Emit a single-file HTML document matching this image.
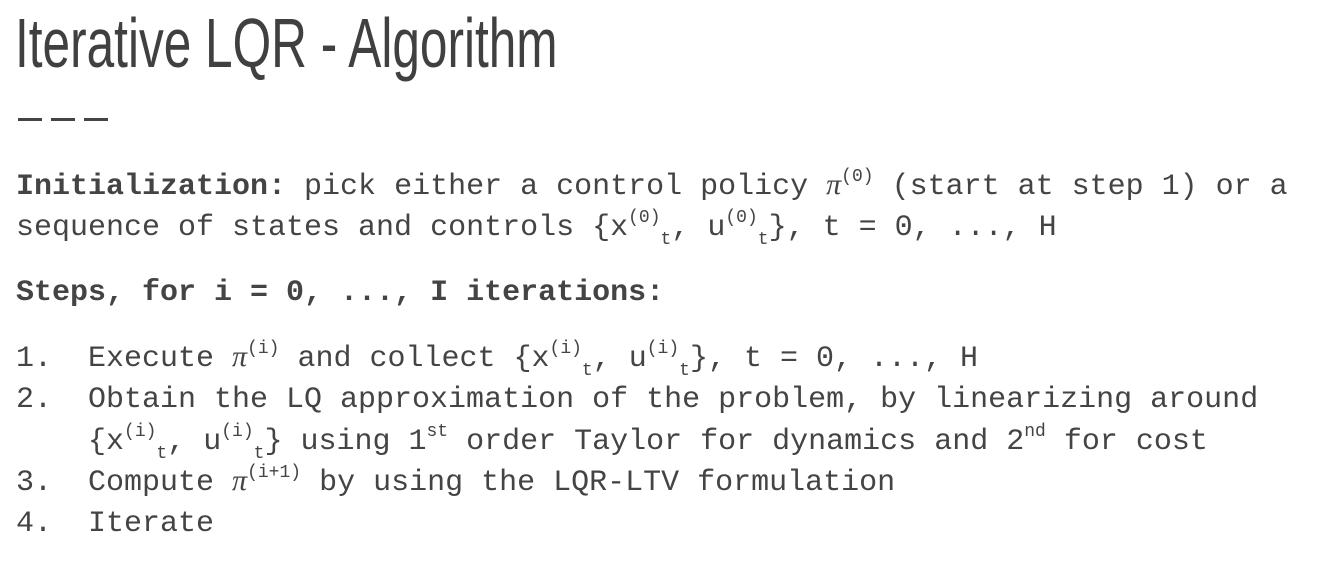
<!DOCTYPE html>
<html><head><meta charset="utf-8"><style>
body{margin:0;background:#fff;width:1328px;height:561px;overflow:hidden;color:#444;}
.t{position:absolute;left:15px;top:3px;font-family:"Liberation Sans",sans-serif;font-size:70px;line-height:80px;white-space:nowrap;transform:scaleX(0.708);transform-origin:left top;color:#404040;}
.d{position:absolute;top:118px;height:3px;width:24px;background:#444;}
.l{position:absolute;font-family:"Liberation Mono",monospace;font-size:30px;line-height:41px;height:41px;white-space:pre;}
sup,sub{font-size:18px;line-height:0;vertical-align:baseline;position:relative;}
sup{top:-13px}
sub{top:9px}
i{font-family:"Liberation Serif",serif;line-height:0;}
b{font-weight:bold}
</style></head><body>
<div class="t">Iterative LQR - Algorithm</div>
<div class="d" style="left:18px"></div><div class="d" style="left:51px"></div><div class="d" style="left:84px"></div>
<div class="l" style="left:16px;top:167px"><b>Initialization:</b> pick either a control policy <i>π</i><sup>(0)</sup> (start at step 1) or a</div>
<div class="l" style="left:16px;top:208px">sequence of states and controls {x<sup>(0)</sup><sub>t</sub>, u<sup>(0)</sup><sub>t</sub>}, t = 0, ..., H</div>
<div class="l" style="left:16px;top:273px"><b>Steps, for i = 0, ..., I iterations:</b></div>
<div class="l" style="left:16px;top:339px">1.</div>
<div class="l" style="left:88px;top:339px">Execute <i>π</i><sup>(i)</sup> and collect {x<sup>(i)</sup><sub>t</sub>, u<sup>(i)</sup><sub>t</sub>}, t = 0, ..., H</div>
<div class="l" style="left:16px;top:380px">2.</div>
<div class="l" style="left:88px;top:380px">Obtain the LQ approximation of the problem, by linearizing around</div>
<div class="l" style="left:88px;top:422px">{x<sup>(i)</sup><sub>t</sub>, u<sup>(i)</sup><sub>t</sub>} using 1<sup>st</sup> order Taylor for dynamics and 2<sup>nd</sup> for cost</div>
<div class="l" style="left:16px;top:463px">3.</div>
<div class="l" style="left:88px;top:463px">Compute <i>π</i><sup>(i+1)</sup> by using the LQR-LTV formulation</div>
<div class="l" style="left:16px;top:504px">4.</div>
<div class="l" style="left:88px;top:504px">Iterate</div>
</body></html>
